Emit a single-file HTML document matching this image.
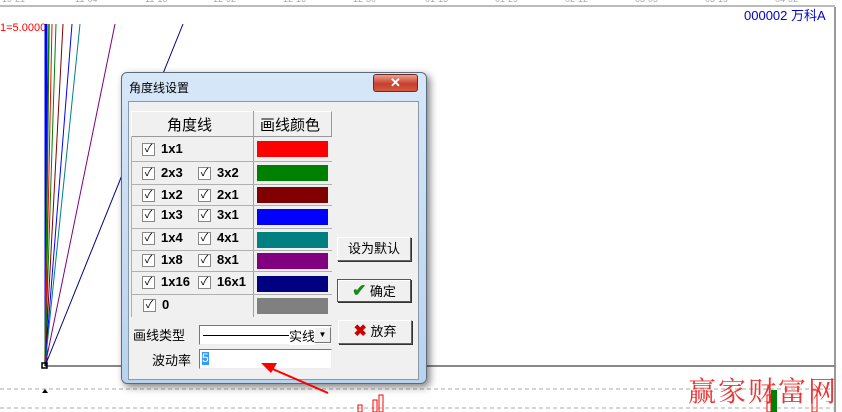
<!DOCTYPE html>
<html><head><meta charset="utf-8"><style>
*{margin:0;padding:0;box-sizing:border-box}
body{width:842px;height:412px;overflow:hidden;background:#fff;position:relative;font-family:"Liberation Sans","Noto Sans CJK SC",sans-serif;font-size:12px}
.a{position:absolute}
.ax{color:#aaa;font-size:9px;top:-6px}
.cb{position:absolute;width:13px;height:13px;border:1px solid #888;background:#fff;font-size:11px;line-height:11px;text-align:center;color:#000}
.lb{position:absolute;font-size:13px;font-weight:bold;color:#000}
.row{position:absolute;left:131px;width:201px;border-bottom:1px solid #b0b0b0}
.sw{position:absolute;left:257px;width:71px}
.btn{position:absolute;background:#f0f0f0;border:1px solid;border-color:#fff #666 #666 #fff;box-shadow:1px 1px 0 #333;font-size:13px;text-align:center}
</style></head><body>
<div class="a" style="left:0;top:5px;width:835px;height:2px;background:#bbb"></div>
<div class="a ax" style="left:2px">10-21</div><div class="a ax" style="left:75px">11-04</div><div class="a ax" style="left:145px">11-18</div><div class="a ax" style="left:213px">12-02</div><div class="a ax" style="left:283px">12-16</div><div class="a ax" style="left:353px">12-30</div><div class="a ax" style="left:425px">01-13</div><div class="a ax" style="left:495px">01-29</div><div class="a ax" style="left:565px">02-12</div><div class="a ax" style="left:635px">03-05</div><div class="a ax" style="left:705px">03-19</div><div class="a ax" style="left:775px">04-02</div>
<div class="a" style="left:834px;top:7px;width:2px;height:405px;background:#999"></div>
<div class="a" style="left:744px;top:5px;color:#00c;font-size:13px">000002 万科A</div>
<div class="a" style="left:0;top:22px;color:#f00;font-size:11px">1=5.0000</div>
<svg class="a" style="left:0;top:0" width="842" height="412">
<line x1="45" y1="366" x2="835" y2="366" stroke="#888" stroke-width="2"/>
<line x1="0" y1="389" x2="835" y2="389" stroke="#aaa" stroke-dasharray="4,3"/>
<line x1="0" y1="408" x2="835" y2="408" stroke="#aaa" stroke-dasharray="4,3"/>
<line x1="46" y1="366" x2="46" y2="24" stroke="#00f" stroke-width="3"/>
<line x1="45" y1="366" x2="49" y2="24" stroke="#008000" stroke-width="1.5"/>
<line x1="45" y1="366" x2="52" y2="24" stroke="#f00"/>
<line x1="45" y1="366" x2="56" y2="24" stroke="#008000"/>
<line x1="45" y1="366" x2="63" y2="24" stroke="#800000"/>
<line x1="45" y1="366" x2="72" y2="24" stroke="#00f"/>
<line x1="45" y1="366" x2="80" y2="24" stroke="#008080"/>
<line x1="45" y1="366" x2="115" y2="24" stroke="#800080"/>
<line x1="45" y1="366" x2="183" y2="24" stroke="#000080"/>
<rect x="42" y="363" width="5" height="5" fill="none" stroke="#000" stroke-width="1.5"/>
<polygon points="42,393 48,393 45,389" fill="#000"/>
<rect x="358" y="405" width="4" height="7" fill="none" stroke="#f00"/>
<rect x="373" y="400" width="4" height="12" fill="none" stroke="#f00"/>
<rect x="379" y="395" width="4" height="17" fill="none" stroke="#f00"/>
<rect x="771" y="390" width="6" height="22" fill="#008000"/>
<rect x="767" y="395" width="4" height="17" fill="none" stroke="#f00"/>
<rect x="812" y="390" width="5" height="22" fill="none" stroke="#f00"/>
</svg>
<div class="a" style="left:688px;top:370px;color:#e33;font-size:28px;font-family:'Noto Serif CJK SC',serif;letter-spacing:2px">赢家财富网</div>
<!-- dialog -->
<div class="a" style="left:121px;top:72px;width:306px;height:312px;border-radius:6px;background:linear-gradient(#d6e7f8,#b9d3ee);border:1px solid #5a6b80;box-shadow:3px 3px 8px rgba(0,0,0,.5)"></div>
<div class="a" style="left:129px;top:79px;font-size:12px;color:#000">角度线设置</div>
<div class="a" style="left:373px;top:74px;width:45px;height:18px;border-radius:3px;background:linear-gradient(#e8a090,#c8402c 55%,#d05a40);border:1px solid #6b2a20;color:#fff;font-weight:bold;text-align:center;font-size:13px;line-height:16px">✕</div>
<div class="a" style="left:128px;top:101px;width:291px;height:279px;background:#f0f0f0;border:1px solid #8a99aa"></div>
<div class="a" style="left:131px;top:111px;width:201px;height:26px;border:1px solid;border-color:#fff #999 #999 #fff;background:#f0f0f0"></div>
<div class="a" style="left:253px;top:111px;width:1px;height:206px;background:#a0a0a0"></div>
<div class="a" style="left:167px;top:114px;font-size:15px">角度线</div>
<div class="a" style="left:260px;top:114px;font-size:15px">画线颜色</div>
<div class="row" style="top:137px;height:25px"></div><div class="row" style="top:162px;height:23px"></div><div class="row" style="top:185px;height:21px"></div><div class="row" style="top:206px;height:23px"></div><div class="row" style="top:229px;height:22px"></div><div class="row" style="top:251px;height:21px"></div><div class="row" style="top:272px;height:23px"></div>
<div class="a" style="left:131px;top:137px;width:1px;height:180px;background:#b0b0b0"></div>
<div class="sw" style="top:141px;height:16px;background:#f00"></div>
<div class="sw" style="top:165px;height:16px;background:#008000"></div>
<div class="sw" style="top:187px;height:16px;background:#800000"></div>
<div class="sw" style="top:209px;height:16px;background:#00f"></div>
<div class="sw" style="top:232px;height:16px;background:#008080"></div>
<div class="sw" style="top:253px;height:16px;background:#800080"></div>
<div class="sw" style="top:276px;height:16px;background:#000080"></div>
<div class="sw" style="top:298px;height:16px;background:#808080"></div>
<div class="cb" style="left:142px;top:143px">✓</div><div class="lb" style="left:161px;top:141px">1x1</div>
<div class="cb" style="left:142px;top:167px">✓</div><div class="lb" style="left:161px;top:165px">2x3</div><div class="cb" style="left:198px;top:167px">✓</div><div class="lb" style="left:217px;top:165px">3x2</div>
<div class="cb" style="left:142px;top:189px">✓</div><div class="lb" style="left:161px;top:187px">1x2</div><div class="cb" style="left:198px;top:189px">✓</div><div class="lb" style="left:217px;top:187px">2x1</div>
<div class="cb" style="left:142px;top:209px">✓</div><div class="lb" style="left:161px;top:207px">1x3</div><div class="cb" style="left:198px;top:209px">✓</div><div class="lb" style="left:217px;top:207px">3x1</div>
<div class="cb" style="left:142px;top:232px">✓</div><div class="lb" style="left:161px;top:230px">1x4</div><div class="cb" style="left:198px;top:232px">✓</div><div class="lb" style="left:217px;top:230px">4x1</div>
<div class="cb" style="left:142px;top:254px">✓</div><div class="lb" style="left:161px;top:252px">1x8</div><div class="cb" style="left:198px;top:254px">✓</div><div class="lb" style="left:217px;top:252px">8x1</div>
<div class="cb" style="left:142px;top:276px">✓</div><div class="lb" style="left:161px;top:274px">1x16</div><div class="cb" style="left:198px;top:276px">✓</div><div class="lb" style="left:217px;top:274px">16x1</div>
<div class="cb" style="left:143px;top:299px">✓</div><div class="lb" style="left:162px;top:297px">0</div>
<div class="a" style="left:133px;top:325px;font-size:13px">画线类型</div>
<div class="a" style="left:152px;top:350px;font-size:13px">波动率</div>
<div class="a" style="left:199px;top:325px;width:133px;height:20px;background:#fff;border:1px solid;border-color:#777 #eee #eee #777"></div>
<div class="a" style="left:203px;top:335px;width:100px;height:1px;background:#000"></div>
<div class="a" style="left:289px;top:326px;font-size:13px;background:#fff">实线</div>
<div class="a" style="left:314px;top:327px;width:17px;height:16px;background:#f0f0f0;border:1px solid;border-color:#fff #777 #777 #fff;font-size:8px;text-align:center;line-height:14px">▼</div>
<div class="a" style="left:199px;top:349px;width:133px;height:20px;background:#fff;border:1px solid;border-color:#777 #eee #eee #777"></div>
<div class="a" style="left:202px;top:352px;width:7px;height:13px;background:#39f;color:#fff;font-size:12px;line-height:13px">5</div>
<div class="btn" style="left:337px;top:237px;width:74px;height:24px;line-height:22px">设为默认</div>
<div class="btn" style="left:337px;top:279px;width:74px;height:23px;line-height:21px;border:1px solid #555;box-shadow:inset 1px 1px 0 #fff,1px 1px 0 #333"><span style="color:#1a8a1a;font-weight:bold;font-size:17px">✔</span> 确定</div>
<div class="btn" style="left:338px;top:320px;width:74px;height:24px;line-height:22px"><span style="color:#c00;font-weight:bold;font-size:16px">✖</span> 放弃</div>
<svg class="a" style="left:0;top:0" width="842" height="412">
<line x1="328" y1="393" x2="268" y2="367" stroke="#f00" stroke-width="2"/>
<polygon points="261,363 277,363 271,373" fill="#f00"/>
</svg>
</body></html>
